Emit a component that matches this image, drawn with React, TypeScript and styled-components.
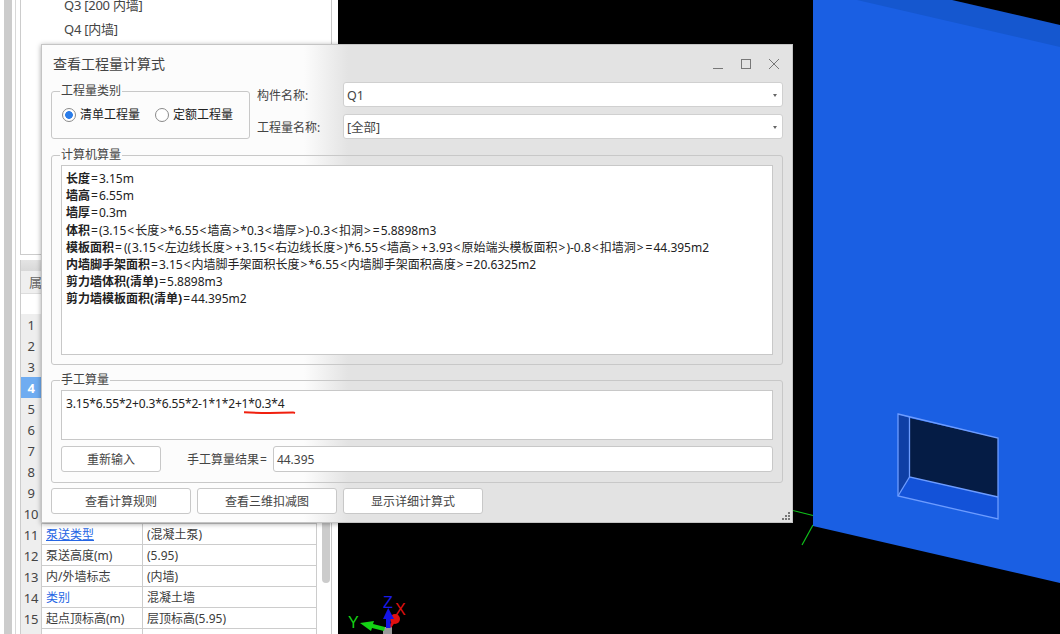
import React from "react"
import styled, { createGlobalStyle } from "styled-components"

const GlobalStyle = createGlobalStyle`
  html, body { margin: 0; padding: 0; background: #000; }
  body { font-family: "Noto Sans", "Noto Sans CJK SC", sans-serif; font-size: 12px; color: #333; }
`

const Page = styled.div`
  position: relative;
  width: 1060px;
  height: 634px;
  display: flex;
  overflow: hidden;
  background: #000;
`

const LeftPanel = styled.aside`
  width: 338px;
  height: 634px;
  flex: none;
  display: flex;
  background: #fff;
`

const Gutter = styled.div`
  width: 8px;
  margin-left: 4px;
  background: #ccc;
`

const Pane = styled.div`
  width: 317px;
  margin-left: 3px;
  padding-left: 4px;
  box-sizing: border-box;
  border-left: 1px solid #d8d8d8;
  border-right: 1px solid #c8c8c8;
`

const Tree = styled.ul`
  list-style: none;
  margin: 0;
  height: 255px;
  padding: 0 0 0 43px;
  box-sizing: border-box;
  border-left: 1px solid #ccc;
  border-bottom: 1px solid #ccc;
  overflow: hidden;
`

const TreeItem = styled.li`
  height: 24px;
  line-height: 24px;
  font-size: 13px;
  letter-spacing: -0.25px;
  color: #444;
  &:first-child { margin-top: -7px; }
`

const TableWrap = styled.div`
  display: flex;
  margin-top: 5px;
`

const PropTable = styled.div`
  width: 297px;
  flex: none;
  border-left: 1px solid #ccc;
  border-right: 1px solid #ccc;
  box-sizing: border-box;
`

const GroupBand = styled.div`
  height: 11px;
  background: linear-gradient(#e4e4e4, #d8d8d8);
`

const HeadRow = styled.div`
  height: 22px;
  line-height: 22px;
  padding-left: 8px;
  background: #efefef;
  color: #666;
  font-size: 13px;
  border-bottom: 1px solid #ddd;
`

const FilterRow = styled.div`
  height: 20px;
  background: #fff;
`

const Row = styled.div`
  display: grid;
  grid-template-columns: 21px 101px 1fr;
  height: 21px;
  line-height: 22px;
  box-sizing: border-box;
  border-bottom: 1px solid #ccc;
  font-size: 12px;
`

const RowNum = styled.div<{ $active?: boolean }>`
  text-align: center;
  font-size: 13px;
  letter-spacing: -0.3px;
  background: ${(p) => (p.$active ? "#6facf1" : "#eee")};
  color: ${(p) => (p.$active ? "#fff" : "#444")};
  font-weight: ${(p) => (p.$active ? 700 : 400)};
  border-right: 1px solid #ccc;
`

const RowName = styled.div<{ $link?: boolean; $under?: boolean }>`
  padding-left: 4px;
  color: ${(p) => (p.$link ? "#2565e4" : "#3c3c3c")};
  text-decoration: ${(p) => (p.$under ? "underline" : "none")};
  border-right: 1px solid #ccc;
  white-space: nowrap;
`

const RowValue = styled.div`
  padding-left: 4px;
  color: #3c3c3c;
  white-space: nowrap;
`

const ScrollTrack = styled.div`
  width: 16px;
  flex: none;
  padding-left: 5px;
  box-sizing: border-box;
`

const ScrollThumb = styled.div`
  width: 8px;
  height: 323px;
  background: #ccc;
  border-radius: 0 0 4px 4px;
`

const Viewport = styled.main`
  flex: 1;
  height: 634px;
`

const ViewSvg = styled.svg`
  display: block;
`

const Dialog = styled.section`
  position: absolute;
  left: 41px;
  top: 44px;
  width: 752px;
  height: 479px;
  box-sizing: border-box;
  padding: 0 9px;
  border: 1px solid #c4c4c4;
  background: linear-gradient(90deg, #fcfcfc 0, #fcfcfc 262px, #e3e3e3 306px);
  box-shadow: 0 1px 5px rgba(0, 0, 0, 0.35);
`

const TitleBar = styled.header`
  height: 37px;
  display: flex;
  align-items: center;
  justify-content: space-between;
`

const Title = styled.h1`
  margin: 0 0 2px 2px;
  font-size: 14px;
  font-weight: 400;
  color: #444;
`

const WinButtons = styled.div`
  display: flex;
  gap: 18px;
  margin-right: 4px;
  color: #777;
`

const TopRow = styled.div`
  display: flex;
  height: 59px;
`

const Group = styled.fieldset<{ $w?: number; $h: number; $top?: number }>`
  margin: ${(p) => p.$top || 0}px 0 0;
  min-width: 0;
  box-sizing: border-box;
  width: ${(p) => (p.$w ? `${p.$w}px` : "100%")};
  height: ${(p) => p.$h}px;
  padding: 3px 9px 0;
  border: 1px solid #c8c8c8;
  border-radius: 3px;
`

const GroupTitle = styled.legend`
  margin-left: -1px;
  padding: 0 1px;
  height: 14px;
  line-height: 14px;
  font-size: 12px;
  color: #444;
`

const RadioRow = styled.div`
  display: flex;
  gap: 15px;
  margin: 6px 0 0 1px;
`

const RadioLabel = styled.label`
  display: flex;
  align-items: center;
  gap: 4px;
  color: #222;
  line-height: 16px;
`

const RadioDot = styled.span<{ $on?: boolean }>`
  width: 14px;
  height: 14px;
  box-sizing: border-box;
  border: 1px solid #8a8a8a;
  border-radius: 50%;
  background: ${(p) => (p.$on ? "radial-gradient(circle, #2b7de9 0 3.5px, #fff 4.2px)" : "#fff")};
`

const ComboColumn = styled.div`
  flex: 1;
  margin: 0 0 0 7px;
  display: flex;
  flex-direction: column;
  gap: 7px;
`

const ComboRow = styled.div`
  display: grid;
  grid-template-columns: 86px 1fr;
  align-items: center;
  height: 25px;
  color: #444;
`

const Combo = styled.div`
  position: relative;
  height: 25px;
  line-height: 25px;
  padding-left: 3px;
  background: #fff;
  border: 1px solid #d0d0d0;
  border-radius: 3px;
  box-sizing: border-box;
  font-size: 12.5px;
  color: #444;
  &::after {
    content: "";
    position: absolute;
    right: 5px;
    top: 11px;
    border: 2.5px solid transparent;
    border-top: 3px solid #666;
  }
`

const TextBox = styled.div<{ $h: number }>`
  height: ${(p) => p.$h}px;
  padding: 4px 4px 0;
  box-sizing: border-box;
  background: #fff;
  border: 1px solid #c8c8c8;
  color: #222;
  line-height: 17.2px;
  white-space: nowrap;
  overflow: hidden;
`

const Sym = styled.span`
  padding: 0 1px;
`

const HandFormula = styled.span`
  position: relative;
  letter-spacing: -0.15px;
`

const RedMark = styled.svg`
  position: absolute;
  left: 177px;
  top: 15px;
`

const ResultRow = styled.div`
  display: flex;
  align-items: center;
  margin-top: 6px;
`

const Button = styled.button<{ $w: number }>`
  width: ${(p) => p.$w}px;
  height: 26px;
  flex: none;
  padding: 0;
  background: #fff;
  border: 1px solid #c8c8c8;
  border-radius: 3px;
  font: inherit;
  color: #444;
`

const ResultLabel = styled.span`
  margin: 0 5px 0 26px;
  color: #444;
  white-space: nowrap;
`

const ResultInput = styled.div`
  flex: 1;
  height: 26px;
  line-height: 25px;
  padding-left: 3px;
  box-sizing: border-box;
  background: #fff;
  border: 1px solid #c8c8c8;
  border-radius: 3px;
  color: #444;
`

const FootRow = styled.div`
  display: flex;
  gap: 6px;
  margin-top: 5px;
`

const Grip = styled.svg`
  position: absolute;
  right: 1px;
  bottom: 1px;
`

const lines: [string, string][] = [
  ["长度", "=3.15m"],
  ["墙高", "=6.55m"],
  ["墙厚", "=0.3m"],
  ["体积", "=(3.15<长度>*6.55<墙高>*0.3<墙厚>)-0.3<扣洞>=5.8898m3"],
  ["模板面积", "=((3.15<左边线长度>+3.15<右边线长度>)*6.55<墙高>+3.93<原始端头模板面积>)-0.8<扣墙洞>=44.395m2"],
  ["内墙脚手架面积", "=3.15<内墙脚手架面积长度>*6.55<内墙脚手架面积高度>=20.6325m2"],
  ["剪力墙体积(清单)", "=5.8898m3"],
  ["剪力墙模板面积(清单)", "=44.395m2"],
]

const props: { name: string; value: string; link?: boolean; under?: boolean }[] = [
  { name: "泵送类型", value: "(混凝土泵)", link: true, under: true },
  { name: "泵送高度(m)", value: "(5.95)" },
  { name: "内/外墙标志", value: "(内墙)" },
  { name: "类别", value: "混凝土墙", link: true },
  { name: "起点顶标高(m)", value: "层顶标高(5.95)" },
  { name: "", value: "" },
]

// the symbols sit wider in the original font
const spaced = (text: string) =>
  text.split(/(\(\(|[<>=+])/).map((part, i) => (i % 2 ? <Sym key={i}>{part}</Sym> : part))

const Scene = () => (
  <ViewSvg width={722} height={634} viewBox="338 0 722 634">
    <line x1={793} y1={510.5} x2={813} y2={515.5} stroke="#0fc21a" strokeWidth={1.2} />
    <line x1={813} y1={525} x2={802} y2={545} stroke="#0fc21a" strokeWidth={1.2} />
    <polygon points="813,0 1060,0 1060,583 813,526" fill="#1a5fe3" />
    <polygon points="952,0 857,0 1060,47 1060,25" fill="#1557cf" />
    <polygon points="952,0 1060,0 1060,25" fill="#000" />
    <polygon points="909.5,418 998,438 998,497 909.5,477" fill="#051c45" />
    <polygon points="898,414 909.5,418 909.5,477 898,496" fill="#0f3fa5" />
    <polygon points="898,496 909.5,477 998,497 998,519" fill="#1352d8" />
    <g stroke="#6d9cff" strokeWidth={1.3} fill="none">
      <polygon points="898,414 998,438 998,519 898,496" />
      <polyline points="909.5,417 909.5,477 998,497" />
      <line x1={909.5} y1={477} x2={898} y2={496} />
    </g>
    {/* axis triad */}
    <rect x={383} y={627} width={9} height={7} fill="#9a9a9a" />
    <circle cx={395} cy={619} r={5} fill="#e01010" />
    <line x1={390} y1={627} x2={396} y2={618} stroke="#e01010" strokeWidth={3} />
    <polygon points="360,623 374,621 373,624 385,627 384,631 372,628 371,631" fill="#14d214" />
    <rect x={386} y={616} width={4.5} height={12} fill="#1414e6" />
    <polygon points="388.2,608 394,619 383,619" fill="#1414e6" />
    <text x={383} y={608} fontFamily="Liberation Sans, sans-serif" fontSize={16} fill="#1a1ae8">Z</text>
    <text x={395} y={615} fontFamily="Liberation Sans, sans-serif" fontSize={16} fill="#e01010">X</text>
    <text x={348} y={628} fontFamily="Liberation Sans, sans-serif" fontSize={16} fill="#14d214">Y</text>
  </ViewSvg>
)

export default function App() {
  return (
    <Page>
      <GlobalStyle />
      <LeftPanel>
        <Gutter />
        <Pane>
          <Tree>
            <TreeItem>Q3 [200 内墙]</TreeItem>
            <TreeItem>Q4 [内墙]</TreeItem>
          </Tree>
          <TableWrap>
            <PropTable>
              <GroupBand />
              <HeadRow>属性</HeadRow>
              <FilterRow />
              {Array.from({ length: 10 }, (_, i) => (
                <Row key={i}>
                  <RowNum $active={i === 3}>{i + 1}</RowNum>
                  <RowName />
                  <RowValue />
                </Row>
              ))}
              {props.map((p, i) => (
                <Row key={i}>
                  <RowNum>{p.name ? i + 11 : ""}</RowNum>
                  <RowName $link={p.link} $under={p.under}>{p.name}</RowName>
                  <RowValue>{p.value}</RowValue>
                </Row>
              ))}
            </PropTable>
            <ScrollTrack>
              <ScrollThumb />
            </ScrollTrack>
          </TableWrap>
        </Pane>
      </LeftPanel>
      <Viewport>
        <Scene />
      </Viewport>

      <Dialog>
        <TitleBar>
          <Title>查看工程量计算式</Title>
          <WinButtons>
            <svg width="10" height="12" viewBox="0 0 10 12"><line x1="0" y1="10.5" x2="10" y2="10.5" stroke="currentColor" /></svg>
            <svg width="10" height="12" viewBox="0 0 10 12"><rect x="0.5" y="1.5" width="9" height="9" fill="none" stroke="currentColor" /></svg>
            <svg width="10" height="12" viewBox="0 0 10 12"><path d="M0 1 L10 11 M10 1 L0 11" stroke="currentColor" fill="none" /></svg>
          </WinButtons>
        </TitleBar>
        <TopRow>
          <Group $w={199} $h={55} $top={2}>
            <GroupTitle>工程量类别</GroupTitle>
            <RadioRow>
              <RadioLabel><RadioDot $on />清单工程量</RadioLabel>
              <RadioLabel><RadioDot />定额工程量</RadioLabel>
            </RadioRow>
          </Group>
          <ComboColumn>
            <ComboRow>构件名称:<Combo>Q1</Combo></ComboRow>
            <ComboRow>工程量名称:<Combo>[全部]</Combo></ComboRow>
          </ComboColumn>
        </TopRow>
        <Group $h={217} $top={7}>
          <GroupTitle>计算机算量</GroupTitle>
          <TextBox $h={190}>
            {lines.map(([k, v]) => (
              <div key={k}><b>{k}</b>{spaced(v)}</div>
            ))}
          </TextBox>
        </Group>
        <Group $h={110} $top={8}>
          <GroupTitle>手工算量</GroupTitle>
          <TextBox $h={50}>
            <HandFormula>
              3.15*6.55*2+0.3*6.55*2-1*1*2+1*0.3*4
              <RedMark width={54} height={5} viewBox="0 0 54 5">
                <path d="M1 2.2 C 15 3, 35 3, 50 2.4 L52 3" stroke="#f0200f" strokeWidth={2} fill="none" />
              </RedMark>
            </HandFormula>
          </TextBox>
          <ResultRow>
            <Button $w={100}>重新输入</Button>
            <ResultLabel>手工算量结果<Sym>=</Sym></ResultLabel>
            <ResultInput>44.395</ResultInput>
          </ResultRow>
        </Group>
        <FootRow>
          <Button $w={140}>查看计算规则</Button>
          <Button $w={140}>查看三维扣减图</Button>
          <Button $w={140}>显示详细计算式</Button>
        </FootRow>
        <Grip width="9" height="9" viewBox="0 0 9 9" fill="#777">
          <rect x="6" y="0" width="2" height="2" />
          <rect x="3" y="3" width="2" height="2" />
          <rect x="6" y="3" width="2" height="2" />
          <rect x="0" y="6" width="2" height="2" />
          <rect x="3" y="6" width="2" height="2" />
          <rect x="6" y="6" width="2" height="2" />
        </Grip>
      </Dialog>
    </Page>
  )
}
